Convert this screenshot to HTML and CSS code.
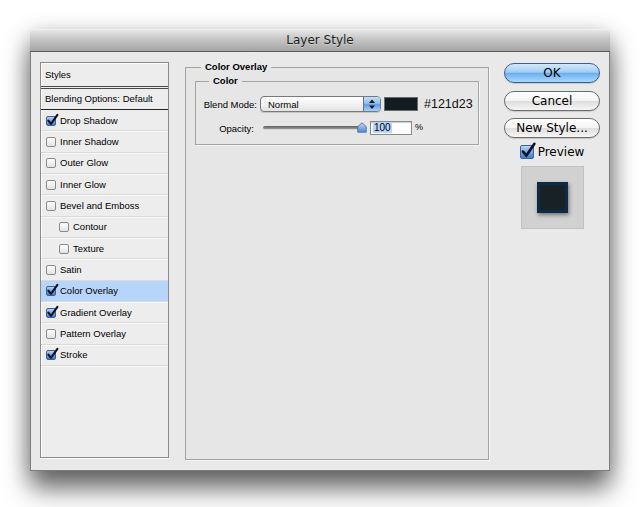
FILE: index.html
```html
<!DOCTYPE html>
<html>
<head>
<meta charset="utf-8">
<title>Layer Style</title>
<link rel="stylesheet" href="styles.css">
</head>
<body>
<div class="window">
  <div class="titlebar">Layer Style</div>
  <div class="wbody">
    <div class="panel">
      <div class="phead">Styles</div>
      <div class="pblend">Blending Options: Default</div>
      <ul class="plist">
        <li><span class="cb on"><svg viewBox="0 0 13 13"><path d="M2.4 6.6 L5 9.8 L11.4 0.8" /></svg></span>Drop Shadow</li>
        <li><span class="cb"></span>Inner Shadow</li>
        <li><span class="cb"></span>Outer Glow</li>
        <li><span class="cb"></span>Inner Glow</li>
        <li><span class="cb"></span>Bevel and Emboss</li>
        <li class="sub"><span class="cb"></span>Contour</li>
        <li class="sub"><span class="cb"></span>Texture</li>
        <li><span class="cb"></span>Satin</li>
        <li class="sel"><span class="cb on"><svg viewBox="0 0 13 13"><path d="M2.4 6.6 L5 9.8 L11.4 0.8" /></svg></span>Color Overlay</li>
        <li><span class="cb on"><svg viewBox="0 0 13 13"><path d="M2.4 6.6 L5 9.8 L11.4 0.8" /></svg></span>Gradient Overlay</li>
        <li><span class="cb"></span>Pattern Overlay</li>
        <li><span class="cb on"><svg viewBox="0 0 13 13"><path d="M2.4 6.6 L5 9.8 L11.4 0.8" /></svg></span>Stroke</li>
      </ul>
    </div>

    <fieldset class="group outer">
      <legend>Color Overlay</legend>
      <fieldset class="group inner">
        <legend>Color</legend>
        <div class="row blend">
          <span class="lbl lbl-blend">Blend Mode:</span>
          <div class="select">
            <span class="sval">Normal</span>
            <span class="stepper">
              <svg viewBox="0 0 16 16" width="16" height="16"><path d="M5 7 L8 3.5 L11 7 Z" fill="#1a1a1a"/><path d="M5 9.5 L8 13 L11 9.5 Z" fill="#1a1a1a"/></svg>
            </span>
          </div>
          <span class="swatch"></span>
          <span class="hex">#121d23</span>
        </div>
        <div class="row opac">
          <span class="lbl lbl-opac">Opacity:</span>
          <div class="slider">
            <span class="track"></span>
            <svg class="thumb" viewBox="0 0 10 11" width="10" height="11">
              <defs><linearGradient id="tg" x1="0" y1="0" x2="0" y2="1"><stop offset="0" stop-color="#c2dcf5"/><stop offset="1" stop-color="#4a8ad2"/></linearGradient></defs>
              <path d="M0.8 4.6 L5 0.8 L9.2 4.6 V10.2 H0.8 Z" fill="url(#tg)" stroke="#4d6f9e" stroke-width="0.9"/>
            </svg>
          </div>
          <span class="input"><span class="hl">100</span></span>
          <span class="pct">%</span>
        </div>
      </fieldset>
    </fieldset>

    <div class="actions">
      <div class="btn primary">OK</div>
      <div class="btn b2">Cancel</div>
      <div class="btn b3">New Style...</div>
      <div class="preview-row">
        <span class="pcb"><svg viewBox="0 0 16 16" width="16" height="16"><path d="M3 8.6 L6.4 12.6 L14.4 0.8" /></svg></span>
        <span>Preview</span>
      </div>
      <div class="preview"><span class="psq"></span></div>
    </div>
  </div>
</div>
</body>
</html>
```

FILE: styles.css
```css
* { box-sizing: border-box; }
html, body { margin: 0; padding: 0; background: #fff; }
body { width: 640px; height: 507px; overflow: hidden; font-family: "Liberation Sans", Arial, sans-serif; color: #000; }

.window {
  margin: 29px 0 0 30px;
  width: 580px;
  height: 442px;
  border-radius: 4px 4px 0 0;
  box-shadow: 0 18px 26px rgba(0,0,0,0.55), 0 4px 22px rgba(0,0,0,0.22);
  background: #e9e9e9;
}
.titlebar {
  height: 23px;
  border-radius: 4px 4px 0 0;
  background: linear-gradient(#e6e6e6 0%, #cbcbcb 35%, #a4a4a4 100%);
  border-bottom: 1px solid #5c5c5c;
  border-top: 1px solid #f0f0f0;
  font-family: "DejaVu Sans", sans-serif;
  font-size: 12px;
  line-height: 21px;
  text-align: center;
  color: #1e1e1e;
  text-shadow: 0 1px 0 rgba(255,255,255,0.35);
}
.wbody {
  height: 419px;
  border: 1px solid #7d7d7d;
  border-top: none;
  padding: 10px 9px 0 9px;
  display: flex;
  align-items: flex-start;
}

/* left panel */
.panel {
  width: 129px;
  height: 396px;
  border: 1px solid #8b8b8b;
  background: #ededed;
  box-shadow: inset 1px 1px 0 #fdfdfd, 0 1px 0 #fafafa;
  font-size: 9.5px;
  flex: none;
}
.phead {
  height: 26px;
  padding-left: 4px;
  line-height: 23px;
  border-bottom: 3px double #4a4a4a;
}
.pblend {
  height: 21px;
  padding-left: 4px;
  line-height: 20px;
  border-bottom: 1px solid #222;
}
.plist { list-style: none; margin: 0; padding: 0; }
.plist li {
  height: 21.33px;
  display: flex;
  align-items: center;
  gap: 4px;
  padding-left: 5px;
  border-bottom: 1px solid #d9d9d9;
  box-shadow: 0 1px 0 #f8f8f8;
}
.plist li.sub { padding-left: 18px; }
.plist li.sel { background: #b7d5fb; }

.cb {
  position: relative;
  width: 10px;
  height: 10px;
  flex: none;
  border: 1px solid #8a8a8a;
  border-radius: 2px;
  background: linear-gradient(#ffffff, #e2e2e2);
  margin-top: 1px;
}
.cb.on {
  border-color: #3e5f92;
  background: linear-gradient(#b3d3f3 0%, #6ea4e0 50%, #3f7fd2 100%);
}
.cb svg {
  position: absolute;
  left: -1px;
  top: -3px;
  width: 13px;
  height: 13px;
  overflow: visible;
}
.cb svg path { fill: none; stroke: #0d0f22; stroke-width: 2.1; stroke-linecap: round; stroke-linejoin: round; }

/* fieldsets */
.group {
  margin: 0;
  min-width: 0;
  border: 1px solid #a3a3a3;
  box-shadow: 1px 1px 0 #f6f6f6;
}
.group > legend {
  font-weight: bold;
  font-size: 9.5px;
  line-height: 12px;
  padding: 0 4px;
}
.outer {
  flex: none;
  width: 304px;
  height: 399px;
  margin: -1px 0 0 16px;
  padding: 2px 9px 0 9px;
  background: #e6e6e6;
}
.outer > legend { margin-left: 6px; }
.inner {
  padding: 9px 0 9px 0;
  height: 70px;
}
.inner > legend { margin-left: 13px; }

.row { display: flex; align-items: center; font-size: 9.5px; }
.lbl { text-align: right; flex: none; }
.lbl-blend { width: 61px; margin-right: 3px; }
.lbl-opac { width: 58px; margin-right: 9px; }
.opac { margin-top: 9px; }

.select {
  width: 121px;
  height: 16px;
  border: 1px solid #7a7a7a;
  border-radius: 4px;
  background: linear-gradient(#ffffff 0%, #f3f3f3 50%, #e3e3e3 100%);
  display: flex;
  align-items: center;
  overflow: hidden;
  box-shadow: 0 1px 1px rgba(0,0,0,0.15);
}
.sval { flex: 1; padding-left: 7px; font-size: 9.5px; }
.stepper {
  width: 17px;
  height: 100%;
  border-left: 1px solid #5675a6;
  background: linear-gradient(#c7e0f8 0%, #8dbdee 45%, #5f9ee6 55%, #a7d3fa 100%);
  display: flex;
  align-items: center;
  justify-content: center;
}
.swatch {
  width: 34px;
  height: 14px;
  margin-left: 3px;
  background: #121d23;
  border: 1px solid #6a6a6a;
}
.hex { margin-left: 6px; font-size: 12.5px; color: #111; }

.slider { position: relative; width: 104px; height: 12px; flex: none; }
.track {
  position: absolute;
  left: 0;
  top: 4px;
  width: 97px;
  height: 4px;
  border-radius: 2px;
  background: linear-gradient(#5d5d5d, #9a9a9a);
  border-bottom: 1px solid #d6d6d6;
}
.thumb { position: absolute; left: 94px; top: 0; }
.input {
  width: 42px;
  height: 14px;
  margin-left: 3px;
  background: #fff;
  border: 1px solid #8a8a8a;
  box-shadow: inset 0 1px 1px rgba(0,0,0,0.2);
  padding-left: 2px;
  font-size: 10px;
  line-height: 12px;
}
.hl { background: #b5d5ff; padding: 0 1px; }
.pct { margin-left: 3px; font-size: 9px; margin-top: -3px; }

/* right column */
.actions {
  flex: none;
  width: 96px;
  margin-left: 15px;
  display: flex;
  flex-direction: column;
  align-items: center;
  font-family: "DejaVu Sans", sans-serif;
  font-size: 12px;
}
.btn {
  width: 96px;
  height: 20px;
  border-radius: 10px;
  border: 1px solid #6c6c6c;
  text-align: center;
  line-height: 18px;
  background: linear-gradient(#ffffff 0%, #f4f4f4 48%, #dedede 52%, #f6f6f6 100%);
  box-shadow: 0 1px 1px rgba(0,0,0,0.15);
}
.primary {
  margin-top: 1px;
  border-color: #3f5d91;
  background: linear-gradient(#d4e8fb 0%, #a3cdf4 45%, #6eaeec 52%, #a6dafd 100%);
}
.b2 { margin-top: 8px; }
.b3 { margin-top: 7px; }
.preview-row {
  margin-top: 6px;
  height: 15px;
  display: flex;
  align-items: center;
  gap: 4px;
}
.pcb {
  position: relative;
  width: 14px;
  height: 14px;
  border: 1px solid #40619a;
  border-radius: 2px;
  background: linear-gradient(#b9d8f6 0%, #72a9e3 50%, #3c7ed3 100%);
}
.pcb svg { position: absolute; left: -1px; top: -3px; overflow: visible; }
.pcb svg path { fill: none; stroke: #0c0e22; stroke-width: 2.6; stroke-linecap: round; stroke-linejoin: round; }
.preview {
  margin-top: 7px;
  width: 63px;
  height: 63px;
  background: #d1d1d1;
  border: 1px solid #c2c2c2;
  display: flex;
  align-items: center;
  justify-content: center;
}
.psq {
  width: 31px;
  height: 31px;
  background: #172126;
  border: 3px solid #0d2b46;
  box-shadow: 1px 2px 4px rgba(0,0,0,0.45);
}
```
